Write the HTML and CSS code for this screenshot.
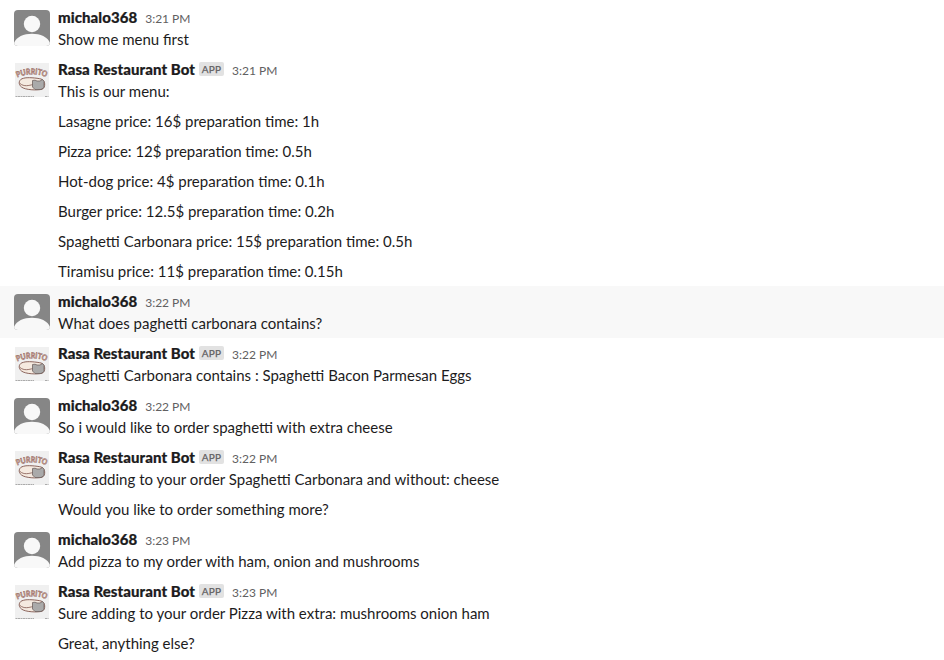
FILE: index.html
```
<!DOCTYPE html>
<html lang="en">
<head>
<meta charset="utf-8">
<title>Restaurant bot conversation</title>
<link rel="stylesheet" href="styles.css">
</head>
<body>
<svg width="0" height="0" class="defs" aria-hidden="true">
<symbol id="person" viewBox="0 0 36 36"><rect width="36" height="36" fill="#868686"/><circle cx="18" cy="14" r="8.2" fill="#f8f8f8"/><path d="M0 36V33C4 20.500 32 20.500 36 33V36Z" fill="#f8f8f8"/></symbol>
<path id="arc" d="M3.200 15.500Q18 9 32.800 15.500"/>
<symbol id="purrito" viewBox="0 0 36 36">
<rect x="1" y="1" width="34" height="34" fill="#f0f0f0"/>
<path d="M9.500 16.300C13 15 23 16 27 17C31.500 18 32 25.500 28 27.300C23 28.500 11 28 7.500 25C3.500 22 5 17 9.500 16.300Z" fill="#f5eae0" stroke="#80564d" stroke-width=".9"/>
<path d="M6 21.500C10 25 15 23.500 19 22.500" fill="none" stroke="#80564d" stroke-width=".8"/>
<path d="M18.500 18.500L21 18.200L23 19H26L28.500 17.500L30 19.500L30 25.500L27 27.500H21L18.500 25Z" fill="#aaa" stroke="#6e6260" stroke-width=".8"/>
<path d="M1.500 34.500H20M31 34.500H34.500" stroke="#999" stroke-width=".8" stroke-dasharray="2 .5"/>
</symbol>
</svg>
<main class="chat">
<article class="message"><svg class="avatar"><use href="#person"/></svg><div class="body"><header><b>michalo368</b><time>3:21 PM</time></header><p>Show me menu first</p></div></article>
<article class="message"><svg class="avatar"><use href="#purrito"/><text class="logo-text"><textPath href="#arc" textLength="30" lengthAdjust="spacingAndGlyphs">PURRITO</textPath></text></svg><div class="body"><header><b>Rasa Restaurant Bot</b><span class="app">APP</span><time>3:21 PM</time></header><p>This is our menu:</p><p>Lasagne price: 16$ preparation time: 1h</p><p>Pizza price: 12$ preparation time: 0.5h</p><p>Hot-dog price: 4$ preparation time: 0.1h</p><p>Burger price: 12.5$ preparation time: 0.2h</p><p>Spaghetti Carbonara price: 15$ preparation time: 0.5h</p><p>Tiramisu price: 11$ preparation time: 0.15h</p></div></article>
<article class="message hovered"><svg class="avatar"><use href="#person"/></svg><div class="body"><header><b>michalo368</b><time>3:22 PM</time></header><p>What does paghetti carbonara contains?</p></div></article>
<article class="message"><svg class="avatar"><use href="#purrito"/><text class="logo-text"><textPath href="#arc" textLength="30" lengthAdjust="spacingAndGlyphs">PURRITO</textPath></text></svg><div class="body"><header><b>Rasa Restaurant Bot</b><span class="app">APP</span><time>3:22 PM</time></header><p>Spaghetti Carbonara contains : Spaghetti Bacon Parmesan Eggs</p></div></article>
<article class="message"><svg class="avatar"><use href="#person"/></svg><div class="body"><header><b>michalo368</b><time>3:22 PM</time></header><p>So i would like to order spaghetti with extra cheese</p></div></article>
<article class="message"><svg class="avatar"><use href="#purrito"/><text class="logo-text"><textPath href="#arc" textLength="30" lengthAdjust="spacingAndGlyphs">PURRITO</textPath></text></svg><div class="body"><header><b>Rasa Restaurant Bot</b><span class="app">APP</span><time>3:22 PM</time></header><p>Sure adding to your order Spaghetti Carbonara and without: cheese</p><p>Would you like to order something more?</p></div></article>
<article class="message"><svg class="avatar"><use href="#person"/></svg><div class="body"><header><b>michalo368</b><time>3:23 PM</time></header><p>Add pizza to my order with ham, onion and mushrooms</p></div></article>
<article class="message"><svg class="avatar"><use href="#purrito"/><text class="logo-text"><textPath href="#arc" textLength="30" lengthAdjust="spacingAndGlyphs">PURRITO</textPath></text></svg><div class="body"><header><b>Rasa Restaurant Bot</b><span class="app">APP</span><time>3:23 PM</time></header><p>Sure adding to your order Pizza with extra: mushrooms onion ham</p><p>Great, anything else?</p></div></article>
</main>
</body>
</html>
```
FILE: styles.css
```
body{margin:0;background:#fff;font:15px/22px Lato,sans-serif;color:#1d1c1d}
.defs{position:absolute}
.chat{padding-top:2px}
.message{display:flex;gap:8px;padding:4px 14px}
.hovered{background:#f8f8f8}
.avatar{flex:none;width:36px;height:36px;margin-top:4px;border-radius:4px}
.logo-text{font:900 8px Lato,sans-serif;fill:#d0a398;stroke:#80564d;stroke-width:.4px}
header{display:flex;align-items:center;height:22px}
b{font-weight:900;letter-spacing:.06px;-webkit-text-stroke:.2px #1d1c1d}
time{font-size:12px;color:#616061;margin-left:8px;padding-top:3px}
.app{box-sizing:border-box;width:25px;height:14px;margin-left:4px;border-radius:2px;background:#e2e2e2;color:#616061;font-size:10px;letter-spacing:.25px;-webkit-text-stroke:.25px #616061;line-height:14px;text-align:center}
p{margin:0 0 8px}
p:last-child{margin:0}
```
